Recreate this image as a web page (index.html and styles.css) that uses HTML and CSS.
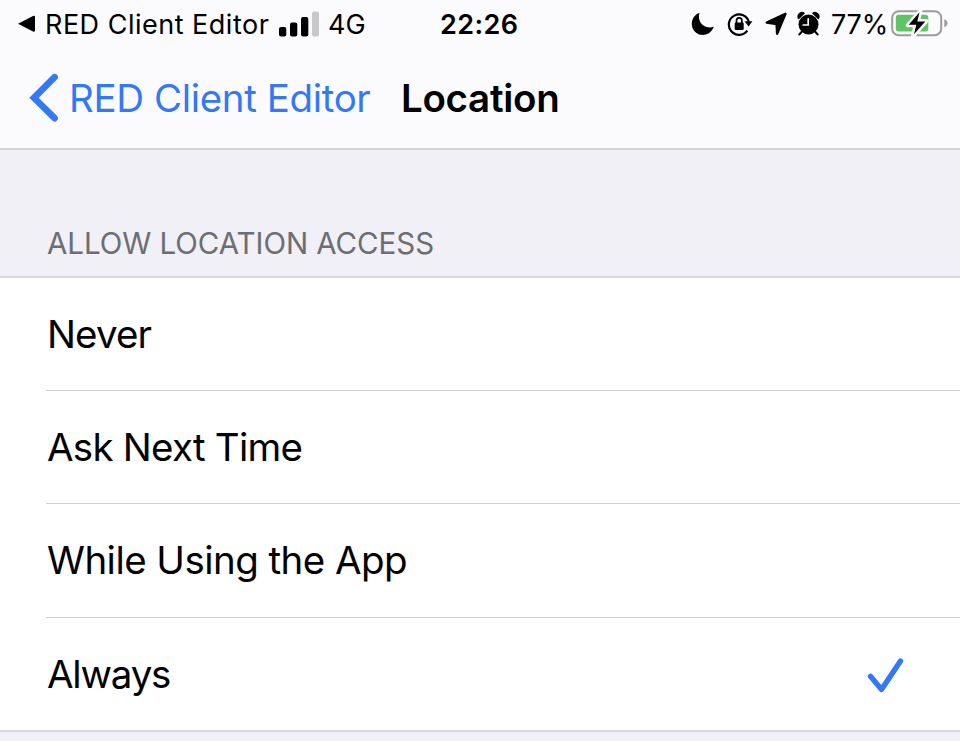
FILE: index.html
```html
<!DOCTYPE html>
<html lang="en">
<head>
<meta charset="utf-8">
<title>Location</title>
<link rel="stylesheet" href="styles.css">
</head>
<body>
<header class="top">
  <div class="status">
    <div class="status-left">
      <svg class="back-app" width="19" height="18" viewBox="0 0 19 18"><path d="M1 8.700 16 .9Q18 .2 18 2V15.300Q18 17.200 16 16.500Z"/></svg>
      <span class="app">RED Client Editor</span>
      <svg class="signal" width="41" height="26" viewBox="0 0 41 26"><rect x="0" y="16" width="7.3" height="9.4" rx="2"/><rect x="11" y="11.5" width="7.3" height="14" rx="2"/><rect x="22" y="6" width="7.3" height="19.5" rx="2"/><rect x="33" y="0.5" width="7" height="25" rx="2" fill="#c8c8ca"/></svg>
      <span class="net">4G</span>
    </div>
    <div class="clock">22:26</div>
    <div class="status-right">
      <svg width="24" height="24" viewBox="0 0 24 24"><path d="M8.500.8C6.300 7.600 10.500 15.500 18.500 15.500Q20.800 15.500 22.800 14.600C21 20 16.800 23 12 23C5.500 23 .8 18 .8 12C.8 7 3.800 2.500 8.500.8Z"/></svg>
      <svg class="lock" width="27" height="26" viewBox="0 0 27 26"><path d="M20.300 19.600A10.200 10.200 0 1 1 21.900 11" fill="none" stroke="#000" stroke-width="2.200"/><path d="M17.600 10.300H25.400L21.600 15.500Z"/><rect x="7.700" y="11.500" width="9" height="7.500" rx="1.200"/><path d="M9.500 12V9.600a2.700 2.700 0 0 1 5.400 0V12" fill="none" stroke="#000" stroke-width="1.700"/></svg>
      <svg class="arrow" width="23" height="24" viewBox="0 0 23 24"><path d="M20.500 1.800 1.700 10.600 11.600 12 12.100 21.700Z" stroke="#000" stroke-width="2.400" stroke-linejoin="round"/></svg>
      <svg class="alarm" width="23" height="26" viewBox="0 0 23 26"><path d="M1.600 8.500A4.500 4.500 0 0 1 8 2.200ZM21.400 8.500A4.500 4.500 0 0 0 15 2.200Z"/><circle cx="11.500" cy="13.500" r="10"/><path d="M5 20.500 2.300 23.500M18 20.500l2.700 3" stroke="#000" stroke-width="2" stroke-linecap="round"/><path d="M11.200 7.800V14H6.200" fill="none" stroke="#fbfbfd" stroke-width="1.700" stroke-linecap="round"/></svg>
      <span class="percent">77%</span>
      <svg class="battery" width="57" height="30" viewBox="0 0 57 30"><rect x="1.200" y="3.200" width="49" height="24" rx="6.500" fill="none" stroke="#9c9c9e" stroke-width="2"/><path d="M53.300 11.300Q56.500 12.500 56.500 15.300T53.300 19.300Z" fill="#9c9c9e"/><rect x="4.800" y="6.800" width="32.500" height="16.800" rx="3" fill="#60c465"/><path d="M29.500 2.500 16.700 17.200H24.500L22 28.300 35.500 13H27Z" fill="#000" stroke="#fbfbfd" stroke-width="4" stroke-linejoin="round"/><path d="M28.500 4.300 17.700 16.800H25.300L23 26.300 34.300 13.400H26.300Z"/></svg>
    </div>
  </div>
  <nav class="nav">
    <svg class="chevron" width="31" height="50" viewBox="0 0 31 50"><path d="M26.600 4.200 6 24.800 26.600 45.200" fill="none" stroke="#3478f6" stroke-width="6.600" stroke-linecap="round" stroke-linejoin="miter"/></svg>
    <a class="back">RED Client Editor</a>
    <h1 class="title">Location</h1>
  </nav>
</header>
<main>
  <h2 class="section">ALLOW LOCATION ACCESS</h2>
  <ul class="list">
    <li class="row"><span class="never">Never</span></li>
    <li class="row"><span class="ask">Ask Next Time</span></li>
    <li class="row"><span class="using">While Using the App</span></li>
    <li class="row"><span class="always">Always</span><svg class="check" width="38" height="36" viewBox="0 0 38 36"><path d="M3.500 18.300 14.500 31.500 33.500 3" fill="none" stroke="#3478f6" stroke-width="5.400" stroke-linecap="round" stroke-linejoin="round"/></svg></li>
  </ul>
</main>
</body>
</html>
```
FILE: styles.css
```css
* { box-sizing: border-box; }
body {
  margin: 0;
  height: 741px;
  overflow: hidden;
  background: #f0f0f6;
  color: #000;
  font-family: Inter, "Liberation Sans", sans-serif;
  white-space: nowrap;
}
svg { display: block; flex: none; }
.top { height: 150px; background: #fbfbfd; border-bottom: 2px solid #d4d4d8; }
.status {
  display: grid;
  grid-template-columns: 440px 80px 1fr;
  align-items: center;
  height: 48px;
  font-size: 27px;
}
.status-left { display: flex; align-items: center; padding-left: 17px; }
.app { width: 243px; padding-left: 9px; letter-spacing: 0.500px; }
.signal { margin-top: -1px; }
.net { margin-left: 8px; }
.clock { font-weight: 600; letter-spacing: 0.400px; }
.status-right { display: flex; align-items: center; padding-left: 171px; }
.lock { margin-left: 12px; }
.arrow { margin-left: 11px; }
.alarm { margin-left: 9px; }
.percent { width: 60px; margin-left: 11px; letter-spacing: -0.200px; }
.battery { margin-top: -2px; }
.nav {
  display: flex;
  align-items: center;
  height: 100px;
  padding-left: 28px;
  font-size: 38.500px;
}
.chevron { margin-right: 10px; }
.back { width: 332px; color: #3478f6; letter-spacing: -0.370px; }
.title { margin: 0; font-size: 38.500px; font-weight: 600; letter-spacing: -0.300px; }
.section {
  height: 126px;
  margin: 0;
  padding: 75px 0 0 47px;
  font-size: 29.500px;
  line-height: 36px;
  font-weight: 400;
  letter-spacing: -0.050px;
  color: #6d6d72;
}
.list {
  margin: 0;
  padding: 0 0 0 46px;
  list-style: none;
  background: #fff;
  border-top: 2px solid #d9d9dc;
  border-bottom: 2px solid #d9d9dc;
}
.row {
  display: flex;
  align-items: center;
  justify-content: space-between;
  height: 113.500px;
  padding: 0 55px 0 1px;
  font-size: 38.500px;
}
.row:first-child { height: 111.500px; }
.row + .row { border-top: 1px solid #d0d0d3; }
.never { letter-spacing: -0.900px; }
.ask { letter-spacing: -0.750px; }
.using { letter-spacing: -0.550px; }
.always { letter-spacing: -1.200px; }
.check { margin-top: 4px; }
```
